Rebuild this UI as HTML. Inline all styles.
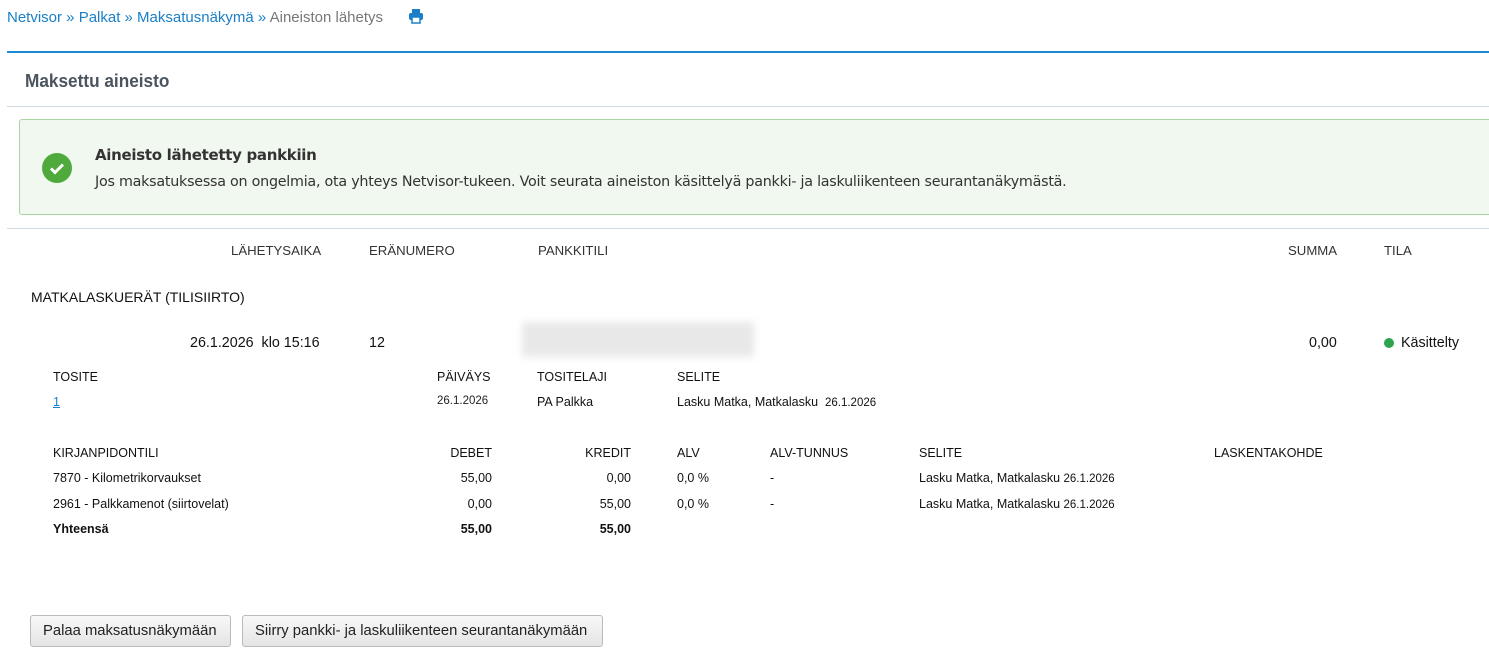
<!DOCTYPE html>
<html><head><meta charset="utf-8"><style>
*{margin:0;padding:0;box-sizing:border-box}
body{width:1489px;height:667px;background:#fff;font-family:"Liberation Sans",Arial,sans-serif;color:#222;position:relative;overflow:hidden}
.a{position:absolute;white-space:nowrap}
.r{text-align:right}
.bc{font-size:15px;top:9px;left:7px;color:#1a7fc8}
.bc span{color:#777}
.h{font-size:13.2px;color:#333}
.s{font-size:12.5px;color:#111}
.btn{position:absolute;top:615px;height:32px;border:1px solid #bbb;border-radius:3px;background:linear-gradient(#f8f8f8,#e4e4e4);font-size:14.8px;line-height:30px;padding:0 12px;color:#222;white-space:nowrap;overflow:hidden}
</style></head><body>
<div class="a bc">Netvisor » Palkat » Maksatusnäkymä » <span>Aineiston lähetys</span></div>
<svg class="a" style="left:408px;top:8px" width="16" height="16" viewBox="0 0 16 16"><rect x="4" y="1" width="8" height="5" fill="#1a7fc8"/><rect x="1" y="5" width="14" height="7" rx="2" fill="#1a7fc8"/><rect x="4" y="9" width="8" height="6" fill="#fff" stroke="#1a7fc8" stroke-width="1.5"/></svg>
<div class="a" style="left:7px;top:51px;width:1482px;height:2px;background:#1a8ad4"></div>
<div class="a" style="left:25px;top:70px;font-size:18.5px;font-weight:bold;color:#4a5560;transform:scaleX(0.93);transform-origin:left">Maksettu aineisto</div>
<div class="a" style="left:7px;top:106px;width:1482px;height:1px;background:#cfdbe3"></div>
<div class="a" style="left:19px;top:119px;width:1480px;height:96px;background:#f1f8ef;border:1px solid #a9d6a0;border-radius:3px"></div>
<div class="a" style="left:42px;top:153px;width:30px;height:30px;border-radius:50%;background:#4eab3b"></div>
<svg class="a" style="left:42px;top:153px" width="30" height="30" viewBox="0 0 30 30"><path d="M9 15.5l4 4 8-8" fill="none" stroke="#fff" stroke-width="3"/></svg>
<div class="a" style="left:95px;top:146px;font-size:15px;font-weight:bold;font-family:'DejaVu Sans',sans-serif;color:#333;letter-spacing:-0.3px">Aineisto lähetetty pankkiin</div>
<div class="a" style="left:95px;top:174px;font-size:14.3px;font-family:'DejaVu Sans',sans-serif;color:#333;letter-spacing:-0.25px">Jos maksatuksessa on ongelmia, ota yhteys Netvisor-tukeen. Voit seurata aineiston käsittelyä pankki- ja laskuliikenteen seurantanäkymästä.</div>
<div class="a" style="left:7px;top:228px;width:1482px;height:1px;background:#cfdbe3"></div>
<div class="a h" style="left:231px;top:243px">LÄHETYSAIKA</div>
<div class="a h" style="left:369px;top:243px">ERÄNUMERO</div>
<div class="a h" style="left:538px;top:243px">PANKKITILI</div>
<div class="a h" style="left:1288px;top:243px">SUMMA</div>
<div class="a h" style="left:1384px;top:243px">TILA</div>
<div class="a" style="left:31px;top:289px;font-size:14px;color:#111">MATKALASKUERÄT (TILISIIRTO)</div>
<div class="a" style="left:190px;top:335px;font-size:14.3px;color:#111">26.1.2026&nbsp; klo 15:16</div>
<div class="a" style="left:369px;top:335px;font-size:14.3px;color:#111">12</div>
<div class="a" style="left:522px;top:322px;width:232px;height:35px;background:#e8e8e8;filter:blur(4px)"></div>
<div class="a" style="left:1309px;top:335px;font-size:14.3px;color:#111">0,00</div>
<div class="a" style="left:1384px;top:338px;width:10px;height:10px;border-radius:50%;background:#2ea44f"></div>
<div class="a" style="left:1401px;top:335px;font-size:14.3px;color:#111">Käsittelty</div>
<div class="a s" style="left:53px;top:370px">TOSITE</div>
<div class="a s" style="left:437px;top:370px">PÄIVÄYS</div>
<div class="a s" style="left:537px;top:370px">TOSITELAJI</div>
<div class="a s" style="left:677px;top:370px">SELITE</div>
<div class="a s" style="left:53px;top:395px;color:#1a7fc8;text-decoration:underline">1</div>
<div class="a" style="left:437px;top:395px;font-size:11.5px">26.1.2026</div>
<div class="a s" style="left:537px;top:395px">PA Palkka</div>
<div class="a s" style="left:677px;top:395px">Lasku Matka, Matkalasku&nbsp; <span style="font-size:11.5px">26.1.2026</span></div>
<div class="a s" style="left:53px;top:446px">KIRJANPIDONTILI</div>
<div class="a s r" style="right:997px;top:446px">DEBET</div>
<div class="a s r" style="right:858px;top:446px">KREDIT</div>
<div class="a s" style="left:677px;top:446px">ALV</div>
<div class="a s" style="left:770px;top:446px">ALV-TUNNUS</div>
<div class="a s" style="left:919px;top:446px">SELITE</div>
<div class="a s" style="left:1214px;top:446px">LASKENTAKOHDE</div>
<div class="a s" style="left:53px;top:471px">7870 - Kilometrikorvaukset</div>
<div class="a s r" style="right:997px;top:471px">55,00</div>
<div class="a s r" style="right:858px;top:471px">0,00</div>
<div class="a s" style="left:677px;top:471px">0,0 %</div>
<div class="a s" style="left:770px;top:471px">-</div>
<div class="a s" style="left:919px;top:471px">Lasku Matka, Matkalasku <span style="font-size:11.5px">26.1.2026</span></div>
<div class="a s" style="left:53px;top:497px">2961 - Palkkamenot (siirtovelat)</div>
<div class="a s r" style="right:997px;top:497px">0,00</div>
<div class="a s r" style="right:858px;top:497px">55,00</div>
<div class="a s" style="left:677px;top:497px">0,0 %</div>
<div class="a s" style="left:770px;top:497px">-</div>
<div class="a s" style="left:919px;top:497px">Lasku Matka, Matkalasku <span style="font-size:11.5px">26.1.2026</span></div>
<div class="a s" style="left:53px;top:522px;font-weight:bold">Yhteensä</div>
<div class="a s r" style="right:997px;top:522px;font-weight:bold">55,00</div>
<div class="a s r" style="right:858px;top:522px;font-weight:bold">55,00</div>
<div class="btn" style="left:30px;width:201px">Palaa maksatusnäkymään</div>
<div class="btn" style="left:242px;width:361px">Siirry pankki- ja laskuliikenteen seurantanäkymään</div>
</body></html>
